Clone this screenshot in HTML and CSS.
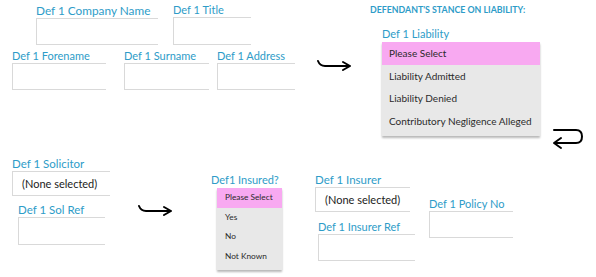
FILE: index.html
```html
<!DOCTYPE html>
<html>
<head>
<meta charset="utf-8">
<link rel="stylesheet" href="styles.css">
</head>
<body>
<div class="canvas">

  <div class="field f-company">
    <div class="lbl lbl-company">Def 1 Company Name</div>
    <div class="box w-company"></div>
  </div>
  <div class="field f-title">
    <div class="lbl">Def 1 Title</div>
    <div class="box w-title"></div>
  </div>

  <div class="row f-names">
    <div class="field">
      <div class="lbl">Def 1 Forename</div>
      <div class="box w-fore"></div>
    </div>
    <div class="field">
      <div class="lbl">Def 1 Surname</div>
      <div class="box w-sur"></div>
    </div>
    <div class="field">
      <div class="lbl">Def 1 Address</div>
      <div class="box w-addr"></div>
    </div>
  </div>

  <svg class="arrow a1" viewBox="0 0 36 16" width="36" height="16">
    <path d="M2 3 Q4 8 9 8 L34 8 M27 4 L34 8 L27 12" fill="none" stroke="#000" stroke-width="2" stroke-linecap="round" stroke-linejoin="round"/>
  </svg>

  <div class="liability">
    <div class="stance">DEFENDANT'S STANCE ON LIABILITY:</div>
    <div class="lbl lbl-liab">Def 1 Liability</div>
    <ul class="dd dd-big">
      <li class="sel">Please Select</li>
      <li>Liability Admitted</li>
      <li>Liability Denied</li>
      <li>Contributory Negligence Alleged</li>
    </ul>
  </div>

  <svg class="arrow a-ret" viewBox="0 0 36 24" width="36" height="24">
    <path d="M4 4 L26 4 Q32 4 32 10.5 Q32 17 26 17 L5 17 M11 12 L4 17 L11 22" fill="none" stroke="#000" stroke-width="2" stroke-linecap="round" stroke-linejoin="round"/>
  </svg>

  <div class="col f-sol">
    <div class="field">
      <div class="lbl lbl-mid">Def 1 Solicitor</div>
      <div class="box w-sol"><span class="val">(None selected)</span></div>
    </div>
    <div class="field f-solref">
      <div class="lbl lbl-mid">Def 1 Sol Ref</div>
      <div class="box w-solref"></div>
    </div>
  </div>

  <svg class="arrow a2" viewBox="0 0 36 16" width="36" height="16">
    <path d="M2 3 Q4 8 9 8 L34 8 M27 4 L34 8 L27 12" fill="none" stroke="#000" stroke-width="2" stroke-linecap="round" stroke-linejoin="round"/>
  </svg>

  <div class="insured">
    <div class="lbl lbl-ins">Def1 Insured?</div>
    <ul class="dd dd-small">
      <li class="sel">Please Select</li>
      <li>Yes</li>
      <li>No</li>
      <li>Not Known</li>
    </ul>
  </div>

  <div class="col f-insurer">
    <div class="field">
      <div class="lbl lbl-mid">Def 1 Insurer</div>
      <div class="box w-insurer"><span class="val">(None selected)</span></div>
    </div>
    <div class="field f-insref">
      <div class="lbl">Def 1 Insurer Ref</div>
      <div class="box w-insref"></div>
    </div>
  </div>

  <div class="field f-policy">
    <div class="lbl">Def 1 Policy No</div>
    <div class="box w-policy"></div>
  </div>

</div>
</body>
</html>
```

FILE: styles.css
```css
html, body {
  margin: 0;
  padding: 0;
  background: #ffffff;
}
body {
  font-family: "Lato", "Noto Sans", sans-serif;
  color: #222;
}
.canvas {
  position: relative;
  width: 596px;
  height: 277px;
  overflow: hidden;
}
.field, .row, .col, .liability, .insured, .arrow {
  position: absolute;
}
.row .field, .col .field {
  position: static;
}
.row {
  display: flex;
}
.col {
  display: flex;
  flex-direction: column;
}
.lbl {
  font-size: 11px;
  line-height: 14px;
  height: 14px;
  color: #2e9cc8;
  white-space: nowrap;
}
.lbl-company { font-size: 11.8px; }
.lbl-mid { font-size: 11.5px; }
.box {
  box-sizing: border-box;
  height: 27px;
  border: 1px solid #d9d9d9;
  border-right: none;
  background: #fff;
  display: flex;
  align-items: center;
}
.val {
  font-size: 11px;
  color: #222;
  padding-left: 9px;
  white-space: nowrap;
}

.f-company { left: 36px; top: 4px; }
.w-company { width: 122px; }
.f-title { left: 173px; top: 3px; }
.w-title { width: 78px; height: 28px; }

.f-names { left: 12px; top: 49px; }
.f-names .field:nth-child(1) { margin-right: 18px; }
.f-names .field:nth-child(2) { margin-right: 8px; }
.w-fore { width: 94px; }
.w-sur { width: 85px; }
.w-addr { width: 78px; }

.a1 { left: 316px; top: 58px; }
.a2 { left: 137px; top: 203px; }
.a-ret { left: 550px; top: 126px; }

.liability { left: 370px; top: 4px; }
.stance {
  font-size: 8.8px;
  line-height: 11px;
  font-weight: 700;
  color: #2e9cc8;
  white-space: nowrap;
}
.lbl-liab {
  margin-top: 11px;
  margin-left: 12px;
  height: 16px;
  line-height: 16px;
}
.dd {
  list-style: none;
  margin: 0;
  padding: 0;
  background: #e8e8e8;
  box-shadow: 0 2px 2px rgba(0,0,0,0.28);
  color: #2b2b2b;
}
.dd li {
  white-space: nowrap;
}
.dd .sel {
  background: #f8a9f1;
}
.dd-big {
  margin-left: 12px;
  width: 158px;
  padding-bottom: 4px;
}
.dd-big li {
  height: 22.5px;
  line-height: 22.5px;
  font-size: 10px;
  padding-left: 7px;
}

.f-sol { left: 12px; top: 157px; }
.w-sol { width: 98px; height: 25px; }
.f-solref { margin-left: 6px; margin-top: 7px; }
.w-solref { width: 87px; height: 28px; }

.insured { left: 211px; top: 173px; }
.lbl-ins {
  height: 15px;
  line-height: 14px;
}
.dd-small {
  margin-left: 6px;
  width: 65px;
  padding-bottom: 4px;
}
.dd-small li {
  height: 19.5px;
  line-height: 19.5px;
  font-size: 8.3px;
  padding-left: 8px;
}

.f-insurer { left: 315px; top: 173px; }
.w-insurer { width: 95px; height: 25px; }
.f-insref { margin-left: 3px; margin-top: 8px; }
.w-insref { width: 97px; height: 27px; }

.f-policy { left: 429px; top: 197px; }
.w-policy { width: 84px; }
```
